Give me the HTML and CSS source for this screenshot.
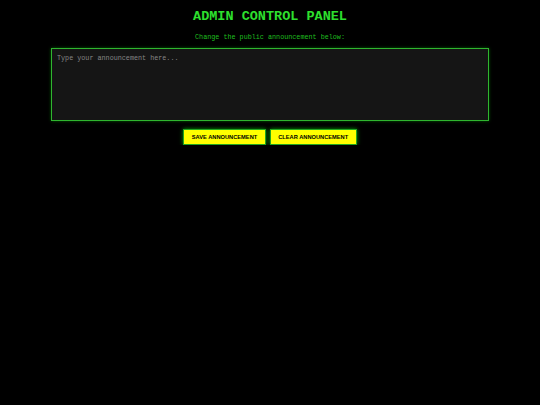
FILE: index.html
```html
<!DOCTYPE html>
<html lang="en">
<head>
<meta charset="utf-8">
<title>Admin Control Panel</title>
<link rel="stylesheet" href="styles.css">
</head>
<body>
  <main class="panel">
    <h1 class="panel-title">ADMIN CONTROL PANEL</h1>
    <p class="panel-hint">Change the public announcement below:</p>
    <textarea class="announce-input" placeholder="Type your announcement here..."></textarea>
    <div class="actions">
      <button class="btn" type="button">SAVE ANNOUNCEMENT</button>
      <button class="btn" type="button">CLEAR ANNOUNCEMENT</button>
    </div>
  </main>
</body>
</html>
```

FILE: styles.css
```css
html, body {
  margin: 0;
  background: #000;
}

body {
  font-family: "Liberation Mono", "Courier New", monospace;
  color: #22dd22;
}

.panel {
  display: flex;
  flex-direction: column;
  align-items: center;
  padding: 9px 51px 0;
}

.panel-title {
  margin: 0;
  font-size: 13.5px;
  line-height: 16px;
  font-weight: bold;
  color: #2ee02e;
}

.panel-hint {
  margin: 8px 0 0;
  font-size: 6.75px;
  line-height: 8px;
  color: #1fbf1f;
}

.announce-input {
  box-sizing: border-box;
  width: 100%;
  height: 73px;
  margin-top: 7px;
  padding: 5px 5px;
  background: #151515;
  border: 1.5px solid #2fb52f;
  box-shadow: 0 0 3px rgba(0, 255, 0, 0.35);
  color: #ccc;
  font-family: "Liberation Mono", "Courier New", monospace;
  font-size: 6.75px;
  line-height: 8px;
  resize: none;
  outline: none;
}

.announce-input::placeholder {
  color: #858585;
}

.actions {
  display: flex;
  gap: 4px;
  margin-top: 8px;
}

.btn {
  height: 16px;
  padding: 0 7.5px;
  background: #ffff00;
  border: 1.5px solid #1fa51f;
  box-shadow: 0 0 4px rgba(0, 255, 0, 0.6);
  color: #000;
  font-family: "Liberation Sans", Arial, sans-serif;
  font-size: 5.7px;
  font-weight: bold;
  cursor: pointer;
}
```
